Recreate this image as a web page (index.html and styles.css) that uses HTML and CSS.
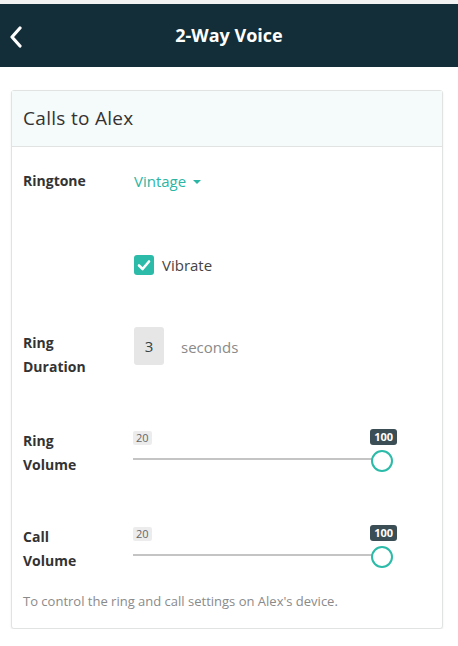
FILE: index.html
```html
<!DOCTYPE html>
<html>
<head>
<meta charset="utf-8">
<link rel="stylesheet" href="styles.css">
</head>
<body>
<div class="topstrip"></div>
<header class="appbar">
  <button class="back" aria-label="Back">
    <svg width="14" height="22" viewBox="0 0 14 22"><path d="M11 2 L3 11 L11 20" fill="none" stroke="#fff" stroke-width="3.2" stroke-linecap="round" stroke-linejoin="round"/></svg>
  </button>
  <h1 class="title">2-Way Voice</h1>
</header>
<main class="content">
  <section class="card">
    <div class="card-head">Calls to Alex</div>
    <div class="card-body">
      <div class="row row-ringtone">
        <div class="label">Ringtone</div>
        <div class="field"><span class="select">Vintage <span class="caret"></span></span></div>
      </div>
      <div class="row row-vibrate">
        <div class="label"></div>
        <div class="field">
          <span class="check"><svg width="20" height="20" viewBox="0 0 20 20"><path d="M5 10.5 L8.6 14 L15 6.5" fill="none" stroke="#fff" stroke-width="2.6" stroke-linecap="round" stroke-linejoin="round"/></svg></span>
          <span class="check-label">Vibrate</span>
        </div>
      </div>
      <div class="row row-duration">
        <div class="label">Ring<br>Duration</div>
        <div class="field">
          <span class="numbox">3</span>
          <span class="unit">seconds</span>
        </div>
      </div>
      <div class="row row-slider">
        <div class="label">Ring<br>Volume</div>
        <div class="field slider">
          <div class="ticks"><span class="min">20</span><span class="max">100</span></div>
          <div class="track"><span class="thumb"></span></div>
        </div>
      </div>
      <div class="row row-slider row-call">
        <div class="label">Call<br>Volume</div>
        <div class="field slider">
          <div class="ticks"><span class="min">20</span><span class="max">100</span></div>
          <div class="track"><span class="thumb"></span></div>
        </div>
      </div>
      <p class="note">To control the ring and call settings on Alex's device.</p>
    </div>
  </section>
</main>
</body>
</html>
```
FILE: styles.css
```css
* { box-sizing: border-box; }
html, body { margin: 0; padding: 0; background: #fff; }
body { font-family: "Open Sans", "Noto Sans", sans-serif; color: #333; width: 458px; }

.topstrip { height: 4px; background: #f2f2f2; }
.appbar {
  height: 63px;
  background: #132e38;
  display: flex;
  align-items: center;
  justify-content: center;
  position: relative;
}
.back {
  position: absolute;
  left: 9px; top: 21px;
  background: none; border: 0; padding: 0;
  width: 16px; height: 24px;
  display: flex; align-items: center;
}
.title {
  margin: 0;
  color: #fff;
  font-size: 18px;
  font-weight: 700;
  margin-top: -1px;
}

.content { padding: 23px 15px 0 11px; }
.card {
  border: 1px solid #e1e3e3;
  border-radius: 3px;
  box-shadow: 0 1px 2px rgba(0,0,0,0.08);
  background: #fff;
}
.card-head {
  background: #f5fafa;
  height: 56px;
  border-bottom: 1px solid #e1e3e3;
  padding: 14px 0 0 11px;
  font-size: 19px;
  letter-spacing: 0.3px;
  color: #333;
}
.card-body { padding: 0 11px; }

.row { display: flex; }
.label {
  width: 111px;
  flex: none;
  font-weight: 700;
  font-size: 14px;
  line-height: 24px;
  color: #333;
}
.field { flex: 1; display: flex; align-items: center; }

.row-ringtone { padding-top: 22px; height: 96px; align-items: flex-start; }
.select { color: #2bb5a4; font-size: 15px; line-height: 24px; display: inline-flex; align-items: center; }
.caret {
  display: inline-block;
  margin-left: 7px; margin-top: 2px;
  border-left: 4px solid transparent;
  border-right: 4px solid transparent;
  border-top: 4px solid #2bb5a4;
}

.row-vibrate { height: 78px; align-items: flex-start; padding-top: 12px; }
.check {
  width: 20px; height: 20px;
  border-radius: 3px;
  background: #2bbba8;
  display: inline-flex;
}
.check-label { margin-left: 8px; font-size: 15px; color: #444; }

.row-duration { height: 101px; align-items: flex-start; padding-top: 8px; }
.row-duration .label { padding-top: 2px; }
.row-duration .field { align-items: flex-start; margin-top: -2px; }
.numbox {
  width: 30px; height: 38px;
  background: #e6e6e6;
  border-radius: 3px;
  display: flex; align-items: center; justify-content: center;
  font-size: 15px; color: #344;
}
.unit { margin-left: 17px; margin-top: 10px; font-size: 15px; color: #8a8a8a; }

.row-slider { height: 96px; align-items: flex-start; }
.row-slider .label { padding-top: 7px; }
.slider { flex-direction: column; align-items: stretch; width: 264px; flex: none; margin-left: -1px; padding-top: 7px; }
.ticks { display: flex; justify-content: space-between; align-items: flex-end; height: 16px; }
.min {
  background: #ececec; color: #666;
  font-size: 11px; line-height: 14px; height: 14px;
  padding: 0 3px; border-radius: 2px;
}
.max {
  background: #3b4e55; color: #fff; font-weight: 700;
  font-size: 11px; line-height: 16px; height: 16px;
  padding: 0 4px; border-radius: 3px;
}
.track {
  position: relative;
  margin-top: 13px;
  height: 2px;
  background: #c4c4c4;
  width: 249px;
}
.thumb {
  position: absolute;
  right: -11px; top: -8px;
  width: 22px; height: 22px;
  border: 2px solid #2bbba8;
  border-radius: 50%;
  background: #fff;
}
.row-call { height: 75px; }

.note { margin: 0; padding-bottom: 18px; font-size: 13px; line-height: 17px; color: #8a8a8a; }
```
